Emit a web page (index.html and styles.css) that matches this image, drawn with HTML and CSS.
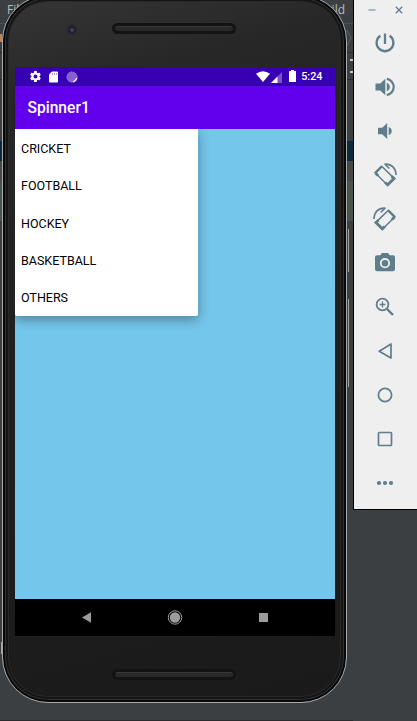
FILE: index.html
```html
<!DOCTYPE html>
<html lang="en">
<head>
<meta charset="utf-8">
<title>Spinner1</title>
<link rel="stylesheet" href="styles.css">
</head>
<body>
<div class="ide">
  <div class="menu-row"><span>File</span><span>Build</span></div>
  <div class="crumb-row"><i></i><svg width="7" height="18" viewBox="0 0 7 18"><path d="M1 1l4 8-4 8" fill="none" stroke="#5d6264"/></svg></div>
  <div class="tool-row"><i></i><b></b></div>
  <div class="blank-row"></div>
  <div class="selected-row"></div>
  <div class="plain-row"></div>
  <div class="green-row"></div>
</div>
<main class="emulator">
  <section class="phone-area">
    <div class="phone">
      <div class="bezel-top"><span class="camera"></span><span class="speaker"></span></div>
      <div class="screen">
        <header class="status">
          <svg width="13" height="13" viewBox="0 0 24 24"><path fill="#fff" d="M19.4 13a7.500 7.500 0 0 0 0-2l2.100-1.600c.2-.2.300-.4.100-.7l-2-3.400c-.1-.2-.4-.3-.6-.2l-2.500 1a7.500 7.500 0 0 0-1.700-1l-.4-2.600c0-.3-.2-.5-.5-.5h-4c-.3 0-.5.2-.5.500L9 5.100a7.500 7.500 0 0 0-1.700 1l-2.500-1c-.2-.1-.5 0-.6.200l-2 3.400c-.1.300 0 .5.100.7L4.500 11a7.500 7.500 0 0 0 0 2l-2.200 1.600c-.1.200-.2.400-.1.700l2 3.400c.1.200.4.300.6.200l2.500-1a7.500 7.500 0 0 0 1.700 1l.4 2.600c0 .3.200.5.500.5h4c.3 0 .5-.2.500-.5l.4-2.600a7.500 7.500 0 0 0 1.700-1l2.500 1c.2.100.5 0 .6-.2l2-3.400c.2-.3.100-.5-.1-.7zM12 15.600a3.600 3.600 0 1 1 0-7.200 3.600 3.600 0 0 1 0 7.200z"/></svg>
          <svg class="sd" width="9" height="12" viewBox="0 0 9 12"><path fill="#fff" d="M3 .5h5q1 0 1 1v9q0 1-1 1H1q-1 0-1-1v-7z"/><path d="M3.500 2v2M5.500 2v2M7.500 2v2" stroke="#9a7ddc" stroke-width=".8"/></svg>
          <svg class="sync" width="12" height="12" viewBox="0 0 12 12"><circle cx="6" cy="6" r="5.200" fill="#8960d2"/><path d="M10.800 7A5 5 0 0 1 7 10.800" fill="none" stroke="#fff" stroke-width="1.300"/><circle cx="6" cy="6" r="5.200" fill="none" stroke="#ad91df" stroke-width=".7" stroke-dasharray="1.500 1"/></svg>
          <span class="grow"></span>
          <svg width="14" height="11" viewBox="0 0 14 11"><path fill="#fff" d="M0 2.800Q7-2.200 14 2.800L7 11z"/></svg>
          <svg class="signal" width="11" height="11" viewBox="0 0 11 11"><path fill="#7b51cc" d="M11 0v11H0z"/><path fill="#fff" d="M6.500 4.500V11H0z"/></svg>
          <svg class="battery" width="7" height="12" viewBox="0 0 7 12"><path fill="#fff" d="M2 0h3v1h2v11H0V1h2z"/></svg>
          <time>5:24</time>
        </header>
        <h1>Spinner1</h1>
        <div class="content">
          <ul>
            <li>CRICKET</li>
            <li>FOOTBALL</li>
            <li>HOCKEY</li>
            <li>BASKETBALL</li>
            <li>OTHERS</li>
          </ul>
        </div>
        <nav class="navbar">
          <svg width="16" height="16" viewBox="0 0 16 16"><path fill="#9c9c9c" d="M3 7.500L12 2.300v10.400z"/></svg>
          <svg width="16" height="16" viewBox="0 0 16 16"><circle cx="8" cy="7.500" r="5.200" fill="#9c9c9c"/><circle cx="8" cy="7.500" r="6.700" fill="none" stroke="#9c9c9c"/></svg>
          <svg width="16" height="16" viewBox="0 0 16 16"><path fill="#9c9c9c" d="M3 3h9v9H3z"/></svg>
        </nav>
      </div>
      <div class="bezel-bottom"><span class="speaker"></span></div>
    </div>
    <i class="side-key power-key"></i>
    <i class="side-key volume-key"></i>
    <i class="side-key left-key"></i>
  </section>
  <aside class="controls">
    <div class="window-row">
      <svg width="8" height="10" viewBox="0 0 8 10"><path d="M.5 5h7" stroke="#a3b1b7" stroke-width="1.800"/></svg>
      <svg width="8" height="10" viewBox="0 0 8 10"><path d="M.8 1.800l6.400 6.400M7.200 1.800L.8 8.200" stroke="#607d8b" stroke-width="1.300"/></svg>
    </div>
    <div class="control"><svg width="24" height="24" viewBox="0 0 24 24"><path d="M12 2.500V13M7.400 4.800a8.400 8.400 0 1 0 9.200 0" fill="none" stroke="#607d8b" stroke-width="2.300"/></svg></div>
    <div class="control"><svg width="24" height="24" viewBox="0 0 24 24"><path fill="#607d8b" d="M2.500 8.500v7H7.300l5 4.700V3.800l-5 4.700z"/><path fill="#607d8b" d="M13.800 7.800q3 1.200 3 4.200t-3 4.200z"/><path d="M13.800 3.900a8.200 8.200 0 0 1 0 16.200" fill="none" stroke="#607d8b" stroke-width="2.200"/></svg></div>
    <div class="control"><svg width="24" height="24" viewBox="0 0 24 24"><path fill="#607d8b" d="M5 8.700v6.600h4.200l5 4.700V4l-5 4.700z"/><path fill="#607d8b" d="M15.700 8q3 1 3 4t-3 4z"/></svg></div>
    <div class="control"><svg width="24" height="24" viewBox="0 0 24 24"><g id="rotate" fill="none" stroke="#607d8b"><path d="M8.700 3.200L21.400 15.600 14.700 22.200 2 9.800z" stroke-width="1.500" stroke-linejoin="round"/><path d="M2.500 10L5 12.400M12.200 19.500l2.500 2.300 6.300-6.200-2.400-2.300" stroke-width="2.800"/><path d="M8.700 3.500L2.300 10" stroke-width="2.400"/><path d="M11.500 1.200Q22 .5 23.200 12" stroke-width="1.600"/><path d="M12 1.200l4.300 4.300" stroke-width="1.600"/></g></svg></div>
    <div class="control"><svg class="mirrored" width="24" height="24" viewBox="0 0 24 24"><use href="#rotate"/></svg></div>
    <div class="control"><svg width="24" height="24" viewBox="0 0 24 24"><path fill="#607d8b" d="M9 2L7.200 4.300H4q-2 0-2 2v12q0 2 2 2h16q2 0 2-2v-12q0-2-2-2h-3.200L15 2z"/><circle cx="12" cy="12.200" r="4.200" fill="#607d8b" stroke="#efefef" stroke-width="1.800"/></svg></div>
    <div class="control"><svg width="24" height="24" viewBox="0 0 24 24"><g fill="none" stroke="#607d8b"><circle cx="9.500" cy="9.500" r="5.900" stroke-width="1.800"/><path d="M9.500 6.600v5.800M6.600 9.500h5.800" stroke-width="1.300"/><path d="M14 14l6 6" stroke-width="2.400"/></g></svg></div>
    <div class="control"><svg width="24" height="24" viewBox="0 0 24 24"><path d="M6.200 12.200L18 5v14z" fill="none" stroke="#607d8b" stroke-width="1.700" stroke-linejoin="round"/></svg></div>
    <div class="control"><svg width="24" height="24" viewBox="0 0 24 24"><circle cx="12" cy="12" r="6.600" fill="none" stroke="#607d8b" stroke-width="1.700"/></svg></div>
    <div class="control"><svg width="24" height="24" viewBox="0 0 24 24"><rect x="5.500" y="5.500" width="13" height="13" rx=".8" fill="none" stroke="#607d8b" stroke-width="1.700"/></svg></div>
    <div class="control"><svg width="24" height="24" viewBox="0 0 24 24"><g fill="#607d8b"><circle cx="6" cy="12" r="2.100"/><circle cx="12" cy="12" r="2.100"/><circle cx="18" cy="12" r="2.100"/></g></svg></div>
  </aside>
</main>
</body>
</html>
```

FILE: styles.css
```css
* { box-sizing: border-box; }
body {
  margin: 0;
  height: 721px;
  position: relative;
  overflow: hidden;
  background: #3c3f41;
  font-family: Roboto, "Liberation Sans", sans-serif;
}
svg { display: block; flex: none; }

/* Editor window behind the emulator */
.ide { position: absolute; inset: 0; width: 353px; border-bottom: 1px solid #2b2b2b; }
.menu-row {
  height: 24px;
  padding: 2px 8px 0 7px;
  display: flex;
  justify-content: space-between;
  border-bottom: 1px solid #505355;
  color: #bbb;
  font: 12px/15px "Open Sans", sans-serif;
}
.crumb-row { height: 29px; display: flex; justify-content: space-between; align-items: center; border-bottom: 1px solid #292b2d; }
.crumb-row i { width: 2px; height: 8px; background: #c78252; }
.tool-row { height: 27px; display: flex; justify-content: space-between; align-items: center; border-bottom: 1px solid #292b2d; }
.tool-row b { width: 3px; height: 14px; border: solid #c8c8c8; border-width: 2px 0; }
.blank-row { height: 61px; }
.selected-row { height: 20px; background: #0d293e; }
.plain-row { height: 20px; background: #45494a; }
.green-row { height: 40px; background: #49544a; }

.emulator { display: flex; align-items: flex-start; position: relative; }
.phone-area { width: 353px; height: 721px; padding-left: 2px; position: relative; }
.phone {
  width: 345px;
  height: 708px;
  margin-top: -5px;
  border: 1px solid #aaa;
  border-radius: 46px;
  padding: 0 11px 0 12px;
  background: linear-gradient(165deg, #363636 0, #272727 14%, #202020 45%, #1a1a1a 100%);
  box-shadow: inset 0 0 0 2px #080808, inset 0 0 0 3px #303030, inset 0 0 0 5px #151515, inset 0 0 0 6px #292929;
}
.bezel-top { height: 71px; position: relative; display: flex; justify-content: center; padding-top: 27px; }
.camera {
  position: absolute;
  left: 51px;
  top: 28px;
  width: 11px;
  height: 11px;
  border-radius: 50%;
  background: radial-gradient(circle at 55% 55%, #514152 0 12%, #20202d 30%, #292832 60%, #303030 100%);
}
.speaker {
  width: 124px;
  height: 11px;
  margin-left: -2px;
  border: 3px solid #131313;
  border-radius: 6px;
  background: linear-gradient(#393939 0 1px, #282828 1px);
}
.screen { width: 320px; height: 569px; display: flex; flex-direction: column; }
.status {
  height: 19px;
  flex: none;
  padding: 0 12.500px 0 14px;
  display: flex;
  align-items: center;
  background: #3700b3;
  color: #fff;
}
.sd { margin-left: 7px; }
.sync { margin-left: 8px; }
.grow { flex: 1; }
.signal { margin: 1px 7px 0 1px; }
.battery { margin-bottom: 1px; }
.status time { margin-left: 5.500px; padding-top: 1px; font-size: 10.800px; font-weight: 500; line-height: 16px; }
.screen h1 {
  height: 43px;
  flex: none;
  margin: 0;
  padding: 1px 0 0 12.500px;
  background: #6200ee;
  color: #fff;
  font-size: 15.600px;
  font-weight: 500;
  line-height: 43px;
  position: relative;
  z-index: 0;
  box-shadow: 0 1px 3px #0005;
}
.content { flex: 1; background: #75c6eb; position: relative; overflow: hidden; }
.content ul {
  width: 183px;
  height: 187px;
  margin: 0;
  padding: 0;
  list-style: none;
  display: grid;
  grid-template-rows: repeat(5, 37.300px);
  background: #fff;
  border-radius: 0 0 2px 2px;
  box-shadow: 0 4px 12px #0005;
}
.content li { padding: 1px 0 0 6px; color: #000; font-size: 12.500px; line-height: 37px; }
.navbar { height: 37px; flex: none; display: flex; justify-content: center; align-items: center; gap: 72.500px; background: #000; }
.bezel-bottom { height: 66px; padding-top: 33px; display: flex; justify-content: center; }

.side-key { position: absolute; width: 1px; background: #a2a3a3; }
.power-key { left: 348px; top: 229px; height: 43px; }
.volume-key { left: 348px; top: 299px; height: 88px; }
.left-key { left: 1px; top: 642px; height: 12px; }

.controls {
  width: 64px;
  height: 510px;
  border: solid #000;
  border-width: 0 0 1px 1px;
  background: #efefef;
}
.window-row { height: 21px; padding: 0 14px 1px 14px; display: flex; justify-content: space-between; align-items: center; }
.control { height: 44px; padding-right: 1px; display: flex; justify-content: center; align-items: center; }
.mirrored { transform: scaleX(-1); }
```
